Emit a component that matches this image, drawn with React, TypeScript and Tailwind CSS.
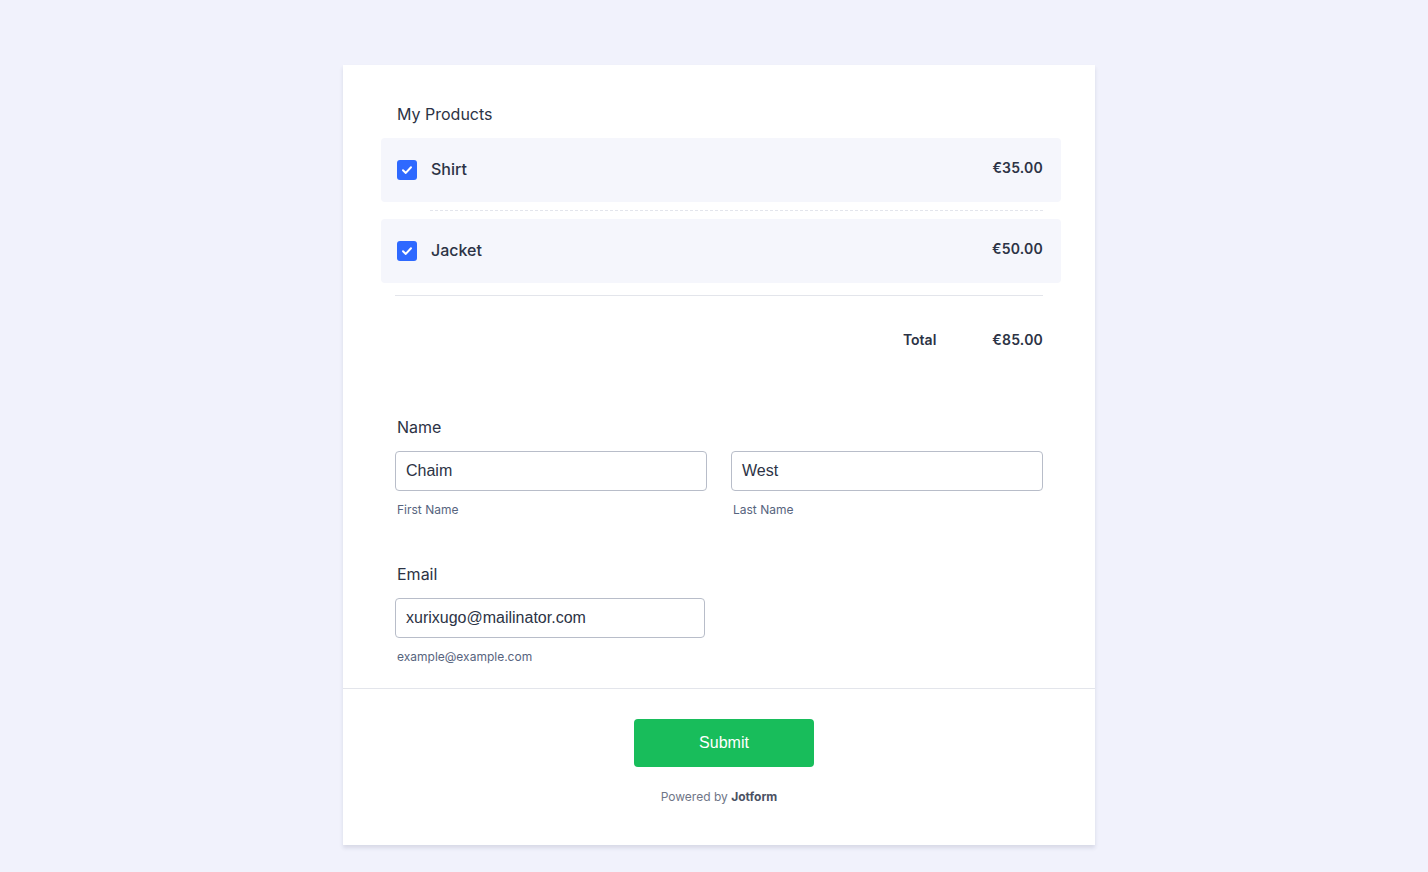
import React from "react";

const inter = { fontFamily: "Inter, 'Noto Sans', sans-serif" };

function Check() {
  return (
    <div className="w-[20px] h-[20px] rounded-[3px] bg-[#2e69ff] flex items-center justify-center shrink-0">
      <svg width="14" height="14" viewBox="0 0 14 14" fill="none">
        <path d="M3 7.3 L5.8 9.9 L11 4.3" stroke="white" strokeWidth="2" strokeLinecap="round" strokeLinejoin="round" />
      </svg>
    </div>
  );
}

function ProductRow({ name, price }: { name: string; price: string }) {
  return (
    <div className="h-[64px] bg-[#f5f6fc] rounded-[4px] flex items-center pl-[16px] pr-[18px]">
      <Check />
      <span className="ml-[14px] mb-[2px] text-[16px] font-medium text-[#2c3345] leading-[20px]">{name}</span>
      <span className="ml-auto mb-[5px] text-[14px] font-semibold text-[#2c3345] leading-[20px] tracking-[0.2px]">{price}</span>
    </div>
  );
}

function Field({ value, sub, width }: { value: string; sub: string; width: string }) {
  return (
    <div className={width}>
      <div className="h-[40px] border border-[#b8bdc9] rounded-[4px] bg-white flex items-center pl-[10px] text-[16px] text-[#2c3345]" style={{ fontFamily: "'Liberation Sans', Arial, sans-serif" }}>
        {value}
      </div>
      <div className="mt-[11px] ml-[2px] text-[12px] leading-[16px] text-[#57647e]">{sub}</div>
    </div>
  );
}

export default function App() {
  return (
    <div className="min-h-[872px] bg-[#f1f2fc] pt-[65px] pl-[343px]" style={inter}>
      <div className="w-[752px] bg-white shadow-[0_3px_4px_rgba(37,40,70,0.12)]">
        <div className="pt-[39px] pl-[38px] pr-[34px]">
          <div className="ml-[16px] text-[16px] leading-[20px] text-[#2c3345]">My Products</div>
          <div className="mt-[14px]">
            <ProductRow name="Shirt" price="€35.00" />
            <div className="my-[8px] ml-[49px] mr-[18px] border-t border-dashed border-[#e3e5ec]" />
            <ProductRow name="Jacket" price="€50.00" />
            <div className="mt-[12px] ml-[14px] mr-[18px] border-t border-[#e3e5eb]" />
            <div className="mt-[34px] mr-[18px] flex justify-end items-center text-[14px] leading-[20px] font-semibold text-[#2c3345]">
              <span>Total</span>
              <span className="ml-[56px] tracking-[0.2px]">€85.00</span>
            </div>
          </div>
        </div>
        <div className="pl-[52px] pr-[52px]">
          <div className="mt-[67px] ml-[2px] text-[16px] leading-[20px] text-[#2c3345]">Name</div>
          <div className="mt-[14px] flex gap-[24px]">
            <Field value="Chaim" sub="First Name" width="w-[312px]" />
            <Field value="West" sub="Last Name" width="w-[312px]" />
          </div>
          <div className="mt-[46px] ml-[2px] text-[16px] leading-[20px] text-[#2c3345]">Email</div>
          <div className="mt-[14px]">
            <Field value="xurixugo@mailinator.com" sub="example@example.com" width="w-[310px]" />
          </div>
        </div>
        <div className="mt-[23px] border-t border-[#e3e5eb]" />
        <div className="pt-[30px] pb-[40px] flex flex-col items-center">
          <div className="ml-[10px] w-[180px] h-[48px] bg-[#18bd5b] rounded-[4px] flex items-center justify-center text-white text-[16px]" style={{ fontFamily: "'Liberation Sans', Arial, sans-serif" }}>
            Submit
          </div>
          <div className="mt-[22px] text-[12px] leading-[16px] text-[#6f7687]">
            Powered by <span className="font-bold text-[#4b5163]">Jotform</span>
          </div>
        </div>
      </div>
    </div>
  );
}
